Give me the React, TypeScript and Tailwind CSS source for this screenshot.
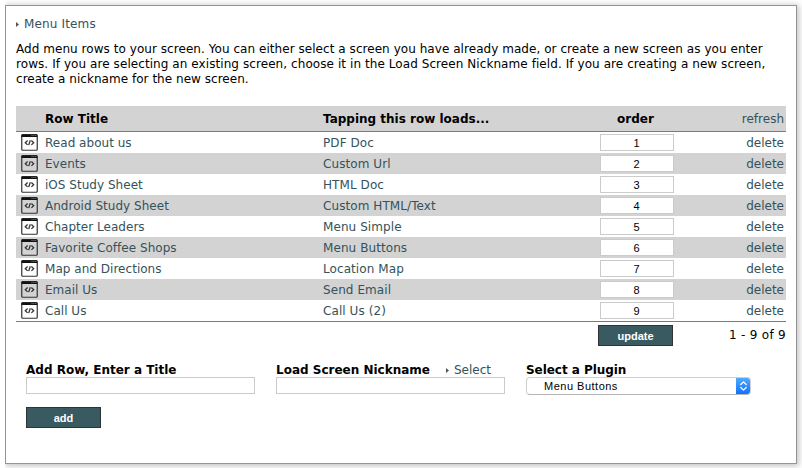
import React from "react";

const rows = [
  ["Read about us", "PDF Doc"],
  ["Events", "Custom Url"],
  ["iOS Study Sheet", "HTML Doc"],
  ["Android Study Sheet", "Custom HTML/Text"],
  ["Chapter Leaders", "Menu Simple"],
  ["Favorite Coffee Shops", "Menu Buttons"],
  ["Map and Directions", "Location Map"],
  ["Email Us", "Send Email"],
  ["Call Us", "Call Us (2)"],
];

const cols = "grid grid-cols-[29px_278px_261px_103px_1fr] items-center";

function CodeIcon() {
  return (
    <svg width="17" height="17" viewBox="0 0 17 17" className="ml-[5px] block">
      <rect x="0.75" y="0.75" width="15.5" height="15.5" rx="1" fill="none" stroke="#333" strokeWidth="1.2" />
      <rect x="0.5" y="0.3" width="16" height="2.7" rx="0.8" fill="#111" />
      <path d="M10.5 1.5h1M12.4 1.5h1M14.3 1.5h1" stroke="#999" strokeWidth="0.8" />
      <path d="M6.6 6.5 4.3 8.7l2.3 2.2M10.4 6.5l2.3 2.2-2.3 2.2M9.3 6.3l-1.6 4.8" fill="none" stroke="#333" strokeWidth="1.3" />
    </svg>
  );
}

function Arrow() {
  return (
    <svg width="3" height="5" viewBox="0 0 3 5" className="block">
      <path d="M0 0 3 2.5 0 5Z" fill="#555" />
    </svg>
  );
}

function DarkButton({ children }: { children: React.ReactNode }) {
  return (
    <button className="block h-[21px] w-[75px] border border-[#2d3436] bg-[#3a5a61] pt-px text-center font-['Liberation_Sans',Arial,sans-serif] text-[11px] leading-[18px] font-bold text-white">
      {children}
    </button>
  );
}

export default function App() {
  return (
    <div className="ml-[5px] h-[468px] w-[797px] overflow-hidden bg-white pt-[5px] font-['DejaVu_Sans',Verdana,sans-serif] text-[12px] leading-[15px] text-black">
      <main className="h-[459px] w-[792px] border border-[#949494] bg-white pt-[11px] pl-[10px] shadow-[1px_1px_6px_1px_rgba(0,0,0,0.24)]">
        <div className="flex h-[15px] items-center gap-[5px] text-[#34525a]">
          <Arrow />
          <a className="tracking-[0.15px]">Menu Items</a>
        </div>
        <p className="mt-[10px] h-[45px] whitespace-nowrap">
          <span className="tracking-[0.05px]">Add menu rows to your screen. You can either select a screen you have already made, or create a new screen as you enter</span>
          <br />
          <span className="tracking-[0.073px]">rows. If you are selecting an existing screen, choose it in the Load Screen Nickname field. If you are creating a new screen,</span>
          <br />
          <span className="tracking-[0.03px]">create a nickname for the new screen.</span>
        </p>

        <section className="mt-[19px] w-[770px]">
          <div className={`${cols} h-[26px] border-b border-[#7b7b7b] bg-[#d3d3d3] font-bold`}>
            <span className="pt-px" />
            <span className="pt-px">Row Title</span>
            <span className="pt-px">Tapping this row loads...</span>
            <span className="pt-px text-center">order</span>
            <a className="pt-px pr-[2px] text-right font-normal text-[#34525a]">refresh</a>
          </div>
          <div className="border-b border-[#7b7b7b]">
            {rows.map(([title, kind], i) => (
              <div key={title} className={`${cols} h-[21px] text-[#34525a] even:bg-[#d3d3d3]`}>
                <CodeIcon />
                <a className="pt-[2px] tracking-[0.03px]">{title}</a>
                <a className="pt-[2px] tracking-[0.08px]">{kind}</a>
                <input
                  defaultValue={i + 1}
                  className="ml-[16px] h-[17px] w-[74px] border border-[#cbcbcb] bg-white p-0 pt-px pr-px text-center font-['Liberation_Sans',Arial,sans-serif] text-[11px] text-black"
                />
                <a className="pt-[2px] pr-[2px] text-right">delete</a>
              </div>
            ))}
          </div>
          <div className="flex justify-between pt-[3px] pl-[582px]">
            <DarkButton>update</DarkButton>
            <span className="pt-[3px] tracking-[0.3px]">1 - 9 of 9</span>
          </div>
        </section>

        <section className="mt-[16px] flex gap-[21px] pl-[10px]">
          <div className="w-[229px]">
            <label className="block h-[15px] pt-px font-bold">Add Row, Enter a Title</label>
            <input className="block h-[17px] w-[229px] border border-[#cbcbcb] bg-white" />
          </div>
          <div className="w-[229px]">
            <div className="flex h-[15px] items-center pt-[2px] whitespace-nowrap">
              <label className="w-[170px] font-bold">Load Screen Nickname</label>
              <Arrow />
              <a className="ml-[5px] text-[#34525a]">Select</a>
            </div>
            <input className="block h-[17px] w-[229px] border border-[#cbcbcb] bg-white" />
          </div>
          <div className="w-[225px]">
            <label className="block h-[15px] pt-px font-bold tracking-[-0.05px]">Select a Plugin</label>
            <div className="flex h-[18px] w-[225px] overflow-hidden rounded-[4px] border border-[#cfcfcf] border-b-[#b5b5b5] bg-white">
              <span className="flex-1 pl-[17px] font-['Liberation_Sans',Arial,sans-serif] text-[11px] leading-[17px] tracking-[0.5px]">Menu Buttons</span>
              <span className="-my-px -mr-px flex w-[15px] items-center justify-center bg-linear-to-b from-[#55adfb] to-[#0a6cfc]">
                <svg width="7" height="10" viewBox="0 0 7 10" fill="none" stroke="white" strokeWidth="1.2" strokeLinecap="round" strokeLinejoin="round">
                  <path d="M.8 3.5 3.5.8l2.7 2.7M.8 6.5l2.7 2.7 2.7-2.7" />
                </svg>
              </span>
            </div>
          </div>
        </section>
        <div className="mt-[12px] pl-[10px]">
          <DarkButton>add</DarkButton>
        </div>
      </main>
    </div>
  );
}
